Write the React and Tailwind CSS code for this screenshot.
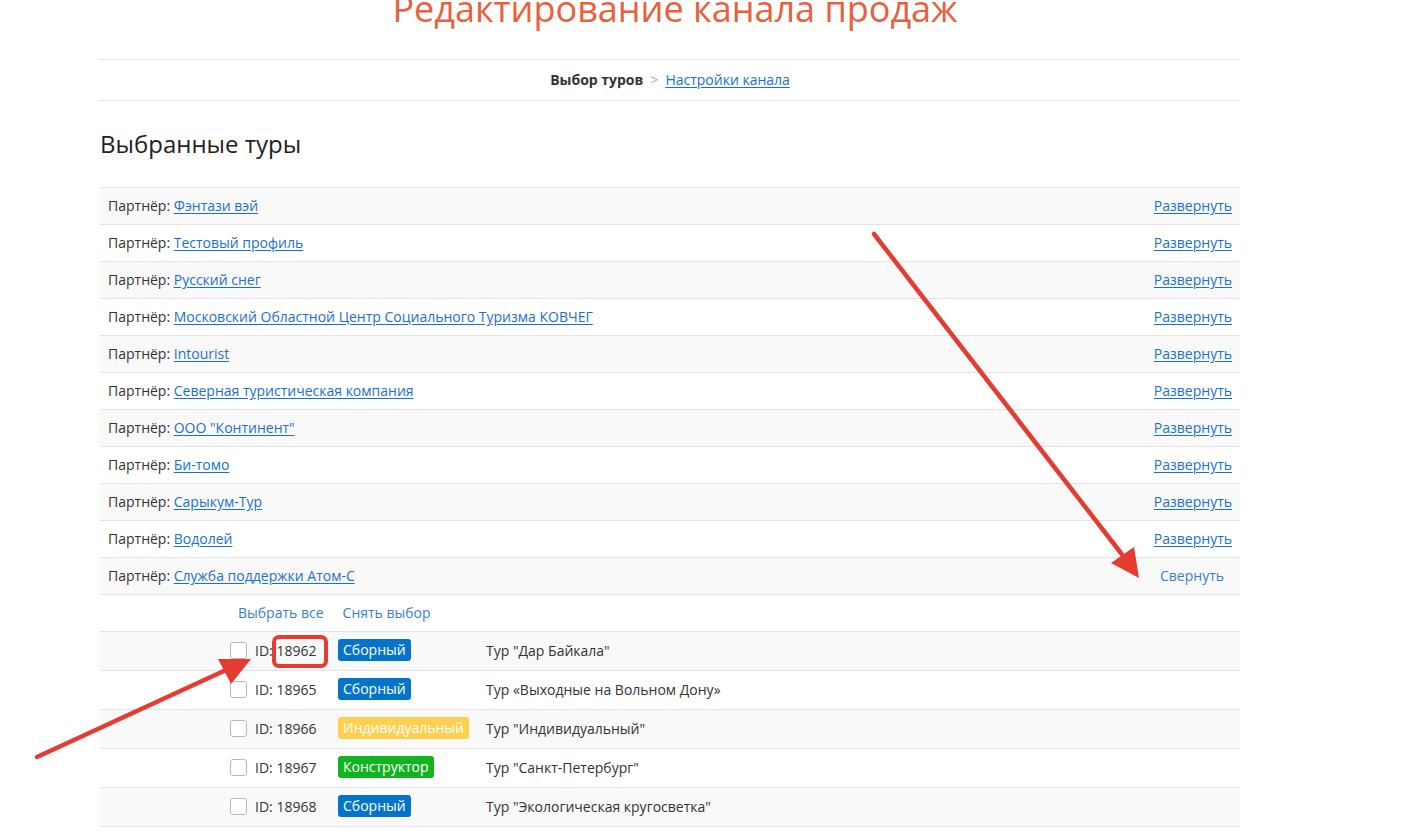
import React from "react";

const partners = [
  "Фэнтази вэй",
  "Тестовый профиль",
  "Русский снег",
  "Московский Областной Центр Социального Туризма КОВЧЕГ",
  "Intourist",
  "Северная туристическая компания",
  'ООО "Континент"',
  "Би-томо",
  "Сарыкум-Тур",
  "Водолей",
];

const tours = [
  { id: 18962, type: "Сборный", name: 'Тур "Дар Байкала"' },
  { id: 18965, type: "Сборный", name: "Тур «Выходные на Вольном Дону»" },
  { id: 18966, type: "Индивидуальный", name: 'Тур "Индивидуальный"' },
  { id: 18967, type: "Конструктор", name: 'Тур "Санкт-Петербург"' },
  { id: 18968, type: "Сборный", name: 'Тур "Экологическая кругосветка"' },
];

function Badge({ type }) {
  const cls =
    type === "Индивидуальный"
      ? "bg-[#ffd04f]"
      : type === "Конструктор"
      ? "bg-[#10b41f]"
      : "bg-[#0474cb]";
  return (
    <span className={`inline-flex h-[22px] items-center rounded-[3px] px-[5px] text-[14px] leading-none text-white ${cls}`}>
      {type}
    </span>
  );
}

function PartnerRow({ name, striped, open }) {
  return (
    <div
      className={`flex h-[37px] items-center justify-between border-t border-[#e3e3e3] pb-[2px] pl-2 ${
        striped ? "bg-[#f9f9f9]" : "bg-white"
      } ${open ? "pr-4" : "pr-2"}`}
    >
      <div>
        Партнёр:{" "}
        <a href="#" className="text-[#1a70d0] underline underline-offset-2">
          {name}
        </a>
      </div>
      {open ? (
        <a href="#" className="text-[#3a7fcf]">Свернуть</a>
      ) : (
        <a href="#" className="text-[#1a70d0] underline underline-offset-2">Развернуть</a>
      )}
    </div>
  );
}

function TourRow({ tour, striped }) {
  return (
    <div
      className={`flex h-[39px] items-center border-t border-[#e3e3e3] pb-[2px] pl-[130px] ${
        striped ? "bg-[#f9f9f9]" : "bg-white"
      }`}
    >
      <span className="h-[17px] w-[17px] rounded-[3px] border border-[#b8b8b8] bg-white" />
      <span className="ml-2 w-[83px]">ID: {tour.id}</span>
      <span className="w-[148px]">
        <Badge type={tour.type} />
      </span>
      <span>{tour.name}</span>
    </div>
  );
}

function Annotations() {
  return (
    <svg
      className="pointer-events-none absolute left-0 top-0"
      width="1409"
      height="831"
      viewBox="0 0 1409 831"
    >
      <g stroke="#e53b30" strokeWidth="4.5" strokeLinecap="round" fill="none">
        <line x1="874" y1="234" x2="1124" y2="557" />
        <line x1="37" y1="757" x2="226" y2="670" />
      </g>
      <g fill="#e53b30">
        <polygon points="1111,563 1134,547 1139,578" />
        <polygon points="218,659 231,684 251,659" />
      </g>
      <rect x="274" y="637" width="52" height="29" rx="5" fill="none" stroke="#e53b30" strokeWidth="4" />
    </svg>
  );
}

export default function App() {
  return (
    <div
      className="relative h-[831px] w-[1409px] overflow-hidden bg-white text-[14px] text-[#333]"
      style={{ fontFamily: '"Open Sans", "Noto Sans", sans-serif' }}
    >
      <div className="ml-[100px] w-[1140px]">
        <h1 className="-mt-[11px] h-[40px] pl-[10px] text-center text-[36px] font-normal leading-[40px] text-[#e8603c]">
          Редактирование канала продаж
        </h1>
        <div className="mt-[30px] flex h-[42px] items-center justify-center border-y border-[#e3e3e3] pb-[2px]">
          <span className="font-bold">Выбор туров</span>
          <span className="mx-[7px] text-[#aaa]">&gt;</span>
          <a href="#" className="text-[#1a70d0] underline underline-offset-2">Настройки канала</a>
        </div>
        <h2 className="mt-[30px] h-[26px] text-[24px] font-normal leading-[26px] text-[#222]">
          Выбранные туры
        </h2>
        <div className="mt-[30px] border-b border-[#e3e3e3]">
          {partners.map((p, i) => (
            <PartnerRow key={p} name={p} striped={i % 2 === 0} />
          ))}
          <PartnerRow name="Служба поддержки Атом-С" striped open />
          <div className="flex h-[37px] items-center gap-[19px] border-t border-[#e3e3e3] pb-[2px] pl-[138px] text-[#3a7fcf]">
            <a href="#">Выбрать все</a>
            <a href="#">Снять выбор</a>
          </div>
          {tours.map((t, i) => (
            <TourRow key={t.id} tour={t} striped={i % 2 === 0} />
          ))}
        </div>
      </div>
      <Annotations />
    </div>
  );
}
